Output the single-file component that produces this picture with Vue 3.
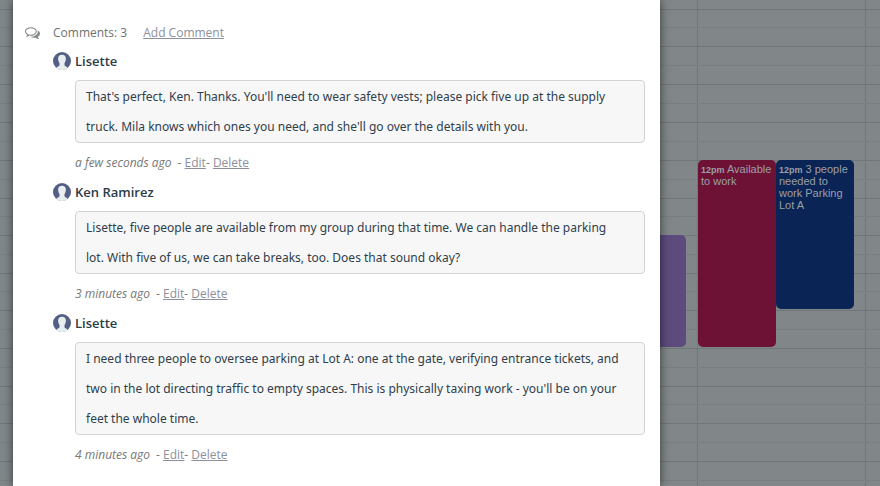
<script setup>
const slots = Array.from({ length: 27 }, (_, i) => ({
  id: i,
  first: i === 0,
  half: i % 2 === 1,
  short: [1, 11, 15, 21].includes(i),
}))

const comments = [
  {
    id: 1,
    author: 'Lisette',
    text: "That's perfect, Ken. Thanks. You'll need to wear safety vests; please pick five up at the supply truck. Mila knows which ones you need, and she'll go over the details with you.",
    when: 'a few seconds ago',
  },
  {
    id: 2,
    author: 'Ken Ramirez',
    text: 'Lisette, five people are available from my group during that time. We can handle the parking lot. With five of us, we can take breaks, too. Does that sound okay?',
    when: '3 minutes ago',
  },
  {
    id: 3,
    author: 'Lisette',
    text: "I need three people to oversee parking at Lot A: one at the gate, verifying entrance tickets, and two in the lot directing traffic to empty spaces. This is physically taxing work - you'll be on your feet the whole time.",
    when: '4 minutes ago',
  },
]
</script>

<template>
  <div class="page">
    <div class="calendar">
      <div v-for="day in 3" :key="day" class="day">
        <div
          v-for="slot in slots"
          :key="slot.id"
          class="slot"
          :class="{ first: slot.first, half: slot.half, short: slot.short }"
        ></div>
        <div v-if="day === 1" class="event purple"></div>
        <template v-if="day === 2">
          <div class="event crimson"><b>12pm</b> Available to work</div>
          <div class="event navy"><b>12pm</b> 3 people needed to work Parking Lot A</div>
        </template>
      </div>
    </div>

    <main class="dialog">
      <header class="summary">
        <svg class="bubbles" viewBox="0 0 1792 1792" aria-hidden="true">
          <path
            d="M704 384q-153 0-286 52t-211.500 141-78.500 191q0 82 53 158t149 132l97 56-35 84q34-20 62-39l44-31 53 10q78 14 153 14 153 0 286-52t211.500-141 78.500-191-78.500-191-211.500-141-286-52zm0-128q191 0 353.500 68.500t256.500 186.500 94 257-94 257-256.500 186.500-353.500 68.500q-86 0-176-16-124 88-278 128-36 9-86 16h-3q-11 0-20.500-8t-11.500-21q-1-3-1-6.500t.5-6.500 2-6l2.500-5 3.500-5.500 4-5 4.500-5 4-4.500q5-6 23-25t26-29.500 22.500-29 25-38.500 20.500-44q-124-72-195-177t-71-224q0-139 94-257t256.500-186.500 353.500-68.500zm822 1169q10 24 20.500 44t25 38.500 22.500 29 26 29.500 23 25q1 1 4 4.500t4.500 5 4 5 3.500 5.500l2.500 5 2 6 .5 6.500-1 6.500q-3 14-13 22t-22 7q-50-7-86-16-154-40-278-128-90 16-176 16-271 0-472-132 58 4 88 4 161 0 309-45t264-129q125-92 192-212t67-254q0-77-23-152 129 71 204 178t75 230q0 120-71 224.500t-195 176.500z"
          />
        </svg>
        <span class="count">Comments: 3</span>
        <a href="#add">Add Comment</a>
      </header>

      <article v-for="comment in comments" :key="comment.id" class="comment">
        <h3 class="author">
          <svg class="avatar" viewBox="0 0 18 18" aria-hidden="true">
            <circle cx="9" cy="9" r="9" fill="#545f86" />
            <path
              d="M9 2.800C6.500 2.800 5 4.300 5.100 6.800C5.200 8.700 5.800 10.200 6.500 11V13.200C6 14.200 4.200 14.500 3.200 15.900A9 9 0 0 0 14.800 15.900C13.800 14.500 12 14.200 11.500 13.200V11C12.200 10.200 12.800 8.700 12.900 6.800C13 4.300 11.500 2.800 9 2.800Z"
              fill="#e6eeef"
            />
          </svg>
          {{ comment.author }}
        </h3>
        <p class="message">{{ comment.text }}</p>
        <footer class="meta">
          <em>{{ comment.when }}</em>
          <span>- <a href="#edit">Edit</a>- <a href="#delete">Delete</a></span>
        </footer>
      </article>
    </main>
  </div>
</template>

<style>
body {
  margin: 0;
  background: #818789;
}
</style>

<style scoped>
.page {
  position: relative;
  min-height: 100vh;
  display: flex;
  overflow: hidden;
  font-family: "Open Sans", sans-serif;
}

.calendar {
  position: absolute;
  inset: 0;
  display: grid;
  grid-template-columns: 1fr 168px 15px;
  overflow: hidden;
  background: #818789;
}

.day {
  position: relative;
}

.day + .day {
  border-left: 1px solid #70777a;
}

.slot {
  box-sizing: border-box;
  height: 19px;
  border-bottom: 1px dotted #70777a;
}

.slot.half {
  margin: 0 1px;
}

.slot.first {
  height: 10px;
}

.slot.short {
  height: 18px;
}

.slot:nth-child(odd) {
  border-bottom-style: solid;
}

.event {
  position: absolute;
  box-sizing: border-box;
  width: 78px;
  padding: 3px 2px 3px 3px;
  border-radius: 5px;
  color: #9a9fa8;
  font: 11px/12px "Liberation Sans", Arial, sans-serif;
}

.event b {
  font-size: 9px;
  line-height: 10px;
}

.purple {
  top: 235px;
  right: 11px;
  height: 112px;
  background: #5d4b7d;
}

.crimson {
  top: 160px;
  left: 0;
  height: 187px;
  background: #6e1235;
}

.navy {
  top: 160px;
  left: 78px;
  height: 149px;
  background: #0a2455;
}

.dialog {
  position: relative;
  box-sizing: border-box;
  flex: 1;
  margin: 0 220px 0 13px;
  padding: 17px 15px 0 12px;
  background: #fff;
  box-shadow: 0 0 9px rgba(0, 0, 0, 0.6);
  font-size: 12px;
}

.summary {
  display: flex;
  align-items: center;
  height: 30px;
  color: #707070;
}

.bubbles {
  width: 15px;
  height: 15px;
  margin-right: 13px;
  fill: #85898a;
}

.count {
  margin-right: 16px;
}

a {
  color: #8c909c;
  text-decoration: underline;
}

.comment {
  margin-left: 28px;
}

.author {
  display: flex;
  align-items: center;
  gap: 4px;
  height: 28px;
  margin: 0 0 5px;
  color: #2b3c48;
  font-size: 13px;
  font-weight: 600;
}

.avatar {
  width: 18px;
  height: 18px;
}

.message {
  margin: 0 0 0 22px;
  padding: 1px 22px 0 10px;
  border: 1px solid #d3d3d3;
  border-radius: 4px;
  background: #f7f7f7;
  color: #2f404b;
  font-family: "Noto Sans", "Open Sans", sans-serif;
  font-size: 12px;
  line-height: 30px;
}

.meta {
  display: flex;
  align-items: center;
  gap: 6px;
  height: 22px;
  margin: 8px 0 5px 22px;
  color: #777;
  font-size: 12px;
}
</style>
